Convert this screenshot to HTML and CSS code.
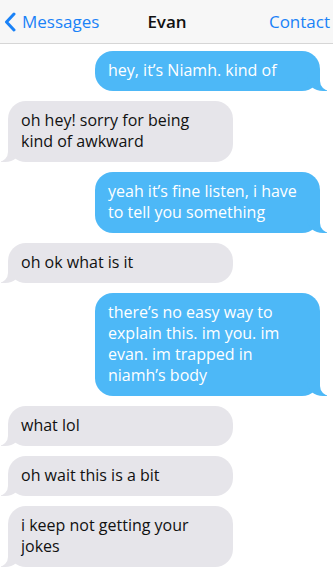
FILE: index.html
```html
<!DOCTYPE html>
<html>
<head>
<meta charset="utf-8">
<link rel="stylesheet" href="styles.css">
</head>
<body>
<header class="nav">
  <a class="back">
    <svg class="chev" width="12" height="20" viewBox="0 0 12 20"><path d="M10 2 L2.5 10 L10 18" fill="none" stroke="#1a82f7" stroke-width="3" stroke-linecap="round" stroke-linejoin="round"/></svg>
    <span>Messages</span>
  </a>
  <div class="title">Evan</div>
  <a class="contact">Contact</a>
</header>
<main class="thread">
  <div class="msg sent">hey, it’s Niamh. kind of</div>
  <div class="msg recv">oh hey! sorry for being kind of awkward</div>
  <div class="msg sent">yeah it’s fine listen, i have to tell you something</div>
  <div class="msg recv">oh ok what is it</div>
  <div class="msg sent">there’s no easy way to explain this. im you. im evan. im trapped in niamh’s body</div>
  <div class="msg recv">what lol</div>
  <div class="msg recv">oh wait this is a bit</div>
  <div class="msg recv">i keep not getting your jokes</div>
</main>
</body>
</html>
```
FILE: styles.css
```css
* { box-sizing: border-box; }
html, body { margin: 0; padding: 0; background: #fff; }
body { font-family: "Open Sans", "Noto Sans", sans-serif; width: 333px; overflow: hidden; }
.nav {
  height: 44px;
  background: #f7f7f7;
  border-bottom: 1px solid #d6d6d6;
  display: grid;
  grid-template-columns: 1fr auto 1fr;
  align-items: center;
  padding: 0 3px 0 4px;
  font-size: 17px;
}
.back { display: flex; align-items: center; gap: 6px; color: #1a82f7; justify-self: start; }
.chev { display: block; }
.title { font-weight: 600; color: #111; }
.contact { color: #1a82f7; justify-self: end; }
.thread {
  display: flex;
  flex-direction: column;
  gap: 10px;
  padding: 7px 13px 0 8px;
}
.msg {
  position: relative;
  width: 225px;
  padding: 9px 20px 10px 13px;
  font-size: 16px;
  line-height: 21px;
  border-radius: 18px;
}
.sent { align-self: flex-end; background: #4db8f7; color: #fff; }
.recv { align-self: flex-start; background: #e6e5ea; color: #111; }
.sent::before {
  content: ""; position: absolute; right: -7px; bottom: 0;
  width: 20px; height: 20px; background: #4db8f7;
  border-bottom-left-radius: 16px 14px;
}
.sent::after {
  content: ""; position: absolute; right: -26px; bottom: 0;
  width: 26px; height: 20px; background: #fff;
  border-bottom-left-radius: 10px;
}
.recv::before {
  content: ""; position: absolute; left: -7px; bottom: 0;
  width: 20px; height: 20px; background: #e6e5ea;
  border-bottom-right-radius: 16px 14px;
}
.recv::after {
  content: ""; position: absolute; left: -26px; bottom: 0;
  width: 26px; height: 20px; background: #fff;
  border-bottom-right-radius: 10px;
}
```
